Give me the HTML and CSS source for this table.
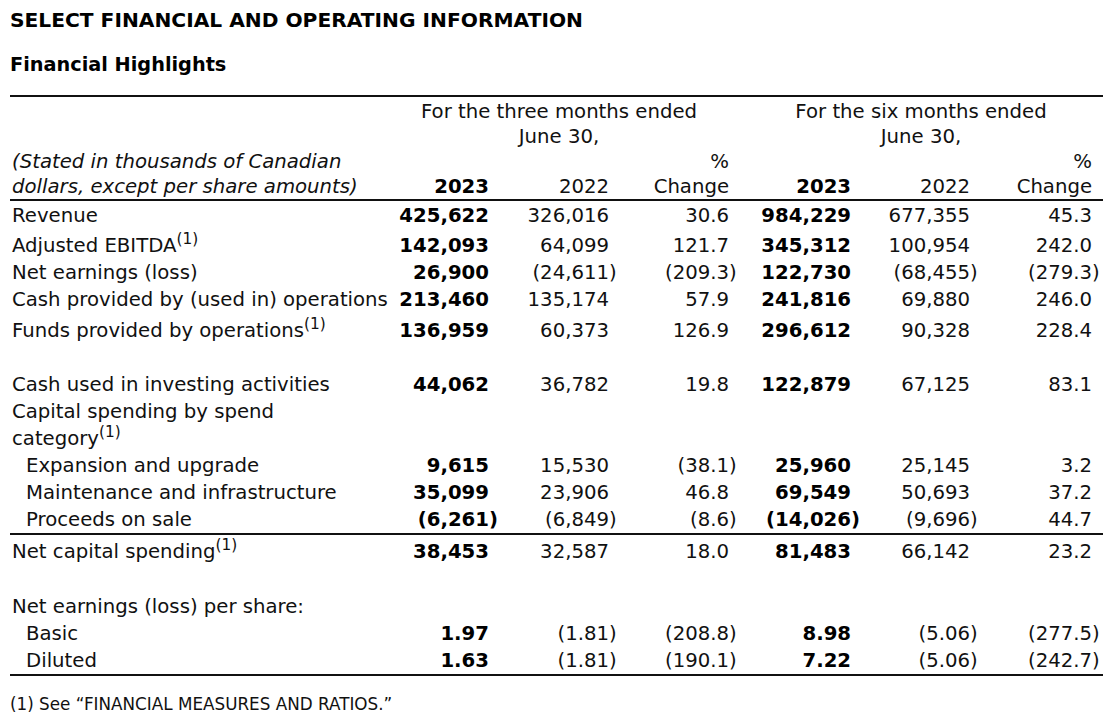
FILE: index.html
```html
<!DOCTYPE html>
<html lang="en">
<head>
<meta charset="utf-8">
<title>Select Financial and Operating Information</title>
<link rel="stylesheet" href="styles.css">
</head>
<body>
<div class="page">
  <h1 class="title">SELECT FINANCIAL AND OPERATING INFORMATION</h1>
  <h2 class="subtitle">Financial Highlights</h2>
  <table class="fin">
    <colgroup>
      <col class="c-label"><col class="c1"><col class="c2"><col class="c3"><col class="c4"><col class="c5"><col class="c6">
    </colgroup>
    <thead>
      <tr class="hrow-a">
        <td></td>
        <td colspan="3" class="grp grp-a">For the three months ended<br>June 30,</td>
        <td colspan="3" class="grp grp-b">For the six months ended<br>June 30,</td>
      </tr>
      <tr class="hrow-b">
        <td class="lbl note">(Stated in thousands of Canadian<br>dollars, except per share amounts)</td>
        <td class="num b">2023</td>
        <td class="num">2022</td>
        <td class="num">%<br>Change</td>
        <td class="num b">2023</td>
        <td class="num">2022</td>
        <td class="num">%<br>Change</td>
      </tr>
    </thead>
    <tbody>
      <tr class="first-row">
        <td class="lbl">Revenue</td>
        <td class="num b">425,622</td><td class="num">326,016</td><td class="num">30.6</td>
        <td class="num b">984,229</td><td class="num">677,355</td><td class="num">45.3</td>
      </tr>
      <tr class="sup-row">
        <td class="lbl">Adjusted EBITDA<sup>(1)</sup></td>
        <td class="num b">142,093</td><td class="num">64,099</td><td class="num">121.7</td>
        <td class="num b">345,312</td><td class="num">100,954</td><td class="num">242.0</td>
      </tr>
      <tr>
        <td class="lbl">Net earnings (loss)</td>
        <td class="num b">26,900</td><td class="num">(24,611<span class="cp">)</span></td><td class="num">(209.3<span class="cp">)</span></td>
        <td class="num b">122,730</td><td class="num">(68,455<span class="cp">)</span></td><td class="num">(279.3<span class="cp">)</span></td>
      </tr>
      <tr>
        <td class="lbl">Cash provided by (used in) operations</td>
        <td class="num b">213,460</td><td class="num">135,174</td><td class="num">57.9</td>
        <td class="num b">241,816</td><td class="num">69,880</td><td class="num">246.0</td>
      </tr>
      <tr class="sup-row sup-row-lg">
        <td class="lbl">Funds provided by operations<sup>(1)</sup></td>
        <td class="num b">136,959</td><td class="num">60,373</td><td class="num">126.9</td>
        <td class="num b">296,612</td><td class="num">90,328</td><td class="num">228.4</td>
      </tr>
      <tr class="blank"><td colspan="7">&nbsp;</td></tr>
      <tr>
        <td class="lbl">Cash used in investing activities</td>
        <td class="num b">44,062</td><td class="num">36,782</td><td class="num">19.8</td>
        <td class="num b">122,879</td><td class="num">67,125</td><td class="num">83.1</td>
      </tr>
      <tr>
        <td class="lbl">Capital spending by spend<br>category<sup>(1)</sup></td>
        <td></td><td></td><td></td><td></td><td></td><td></td>
      </tr>
      <tr>
        <td class="lbl ind">Expansion and upgrade</td>
        <td class="num b">9,615</td><td class="num">15,530</td><td class="num">(38.1<span class="cp">)</span></td>
        <td class="num b">25,960</td><td class="num">25,145</td><td class="num">3.2</td>
      </tr>
      <tr>
        <td class="lbl ind">Maintenance and infrastructure</td>
        <td class="num b">35,099</td><td class="num">23,906</td><td class="num">46.8</td>
        <td class="num b">69,549</td><td class="num">50,693</td><td class="num">37.2</td>
      </tr>
      <tr class="rule">
        <td class="lbl ind">Proceeds on sale</td>
        <td class="num b">(6,261<span class="cp">)</span></td><td class="num">(6,849<span class="cp">)</span></td><td class="num">(8.6<span class="cp">)</span></td>
        <td class="num b">(14,026<span class="cp">)</span></td><td class="num">(9,696<span class="cp">)</span></td><td class="num">44.7</td>
      </tr>
      <tr class="sup-row">
        <td class="lbl">Net capital spending<sup>(1)</sup></td>
        <td class="num b">38,453</td><td class="num">32,587</td><td class="num">18.0</td>
        <td class="num b">81,483</td><td class="num">66,142</td><td class="num">23.2</td>
      </tr>
      <tr class="blank blank-lg"><td colspan="7">&nbsp;</td></tr>
      <tr>
        <td class="lbl">Net earnings (loss) per share:</td>
        <td></td><td></td><td></td><td></td><td></td><td></td>
      </tr>
      <tr>
        <td class="lbl ind">Basic</td>
        <td class="num b">1.97</td><td class="num">(1.81<span class="cp">)</span></td><td class="num">(208.8<span class="cp">)</span></td>
        <td class="num b">8.98</td><td class="num">(5.06<span class="cp">)</span></td><td class="num">(277.5<span class="cp">)</span></td>
      </tr>
      <tr class="rule">
        <td class="lbl ind">Diluted</td>
        <td class="num b">1.63</td><td class="num">(1.81<span class="cp">)</span></td><td class="num">(190.1<span class="cp">)</span></td>
        <td class="num b">7.22</td><td class="num">(5.06<span class="cp">)</span></td><td class="num">(242.7<span class="cp">)</span></td>
      </tr>
    </tbody>
  </table>
  <p class="foot">(1) See “FINANCIAL MEASURES AND RATIOS.”</p>
</div>
</body>
</html>
```

FILE: styles.css
```css
html, body {
  margin: 0;
  padding: 0;
  background: #ffffff;
}

body {
  font-family: "DejaVu Sans", Verdana, sans-serif;
  color: #111111;
}

.page {
  padding: 8px 7px 0 10px;
}

.title {
  margin: 0;
  font-size: 20.2px;
  line-height: 24px;
  font-weight: bold;
  color: #000000;
}

.subtitle {
  margin: 21px 0 18px;
  font-size: 19.3px;
  line-height: 24px;
  font-weight: bold;
  color: #000000;
}

.fin {
  width: 1093px;
  table-layout: fixed;
  border-collapse: separate;
  border-spacing: 0;
  border-top: 2px solid #111111;
  font-size: 19.7px;
}

.c-label { width: 379px; }
.c1 { width: 111px; }
.c2 { width: 120px; }
.c3 { width: 120px; }
.c4 { width: 122px; }
.c5 { width: 119px; }
.c6 { width: 122px; }

.fin td {
  padding: 0;
  white-space: nowrap;
  line-height: 27px;
  vertical-align: top;
}

.fin thead td {
  line-height: 25px;
  vertical-align: bottom;
}

.fin .hrow-a td {
  padding-top: 2px;
}

.fin .hrow-b td {
  border-bottom: 2px solid #111111;
}

.fin .first-row td {
  padding-top: 1px;
}

.fin .lbl {
  padding-left: 2px;
  text-align: left;
}

.fin .ind {
  padding-left: 16px;
}

.fin .note {
  font-style: italic;
}

.fin .num {
  text-align: right;
  padding-right: 11px;
}

.fin .grp {
  text-align: center;
  padding-right: 11px;
}

.fin .grp-b {
  padding-left: 10px;
}

.b {
  font-weight: bold;
  color: #000000;
}

.fin .sup-row td {
  padding-top: 3px;
}

.fin .sup-row-lg td {
  padding-top: 4px;
}

.fin .rule td {
  border-bottom: 2px solid #111111;
}

.fin .blank-lg td {
  padding-top: 1px;
}

.cp {
  display: inline-block;
  width: 0;
  text-align: left;
}

sup {
  font-size: 0.78em;
  line-height: 0;
  vertical-align: 0.5em;
}

.foot {
  margin: 18px 0 0;
  font-size: 16.8px;
  line-height: 20px;
}
```
